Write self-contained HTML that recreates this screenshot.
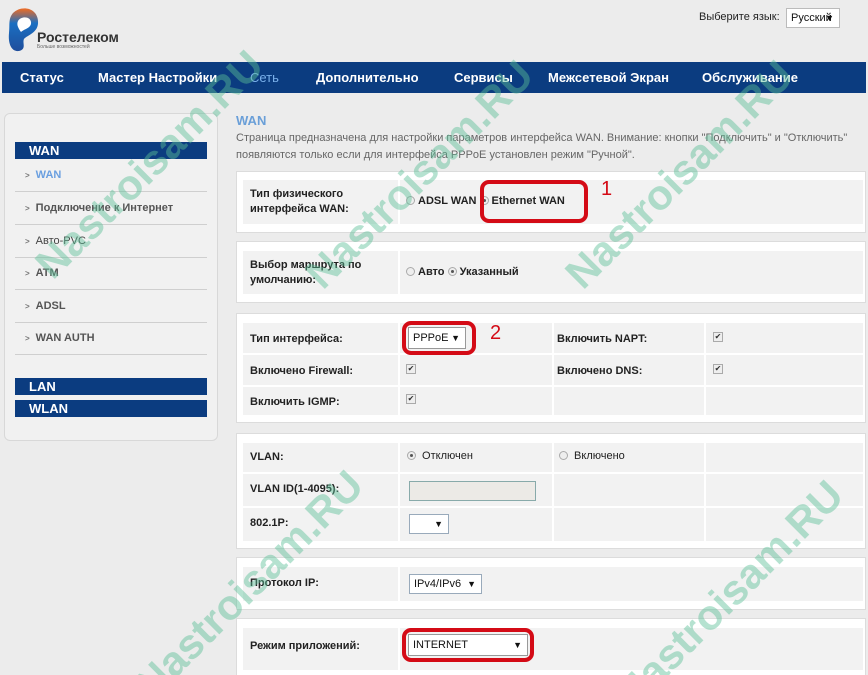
<!DOCTYPE html>
<html><head><meta charset="utf-8"><style>
*{margin:0;padding:0;box-sizing:border-box}
html,body{width:868px;height:675px;overflow:hidden}
body{background:#ececec;font-family:"Liberation Sans",Arial,sans-serif;position:relative;color:#333}
.a{position:absolute}
.nav{left:2px;top:62px;width:864px;height:31px;background:#0b3c80}
.nav span{position:absolute;top:8px;color:#fff;font-weight:bold;font-size:13px}
.side{left:4px;top:113px;width:214px;height:328px;border:1px solid #d8d8d8;border-radius:6px;background:#f1f1f1}
.hd{position:absolute;left:15px;width:192px;height:17px;background:#0b3c80;color:#fff;font-weight:bold;font-size:13px;padding-left:14px;line-height:17px}
.it{position:absolute;left:15px;width:192px;height:33px;border-bottom:1px solid #cfcfcf;font-size:11px;color:#555;padding-left:10px;font-weight:bold}
.it b{font-size:8px;color:#777;margin-right:6px}
.pn{position:absolute;left:236px;width:630px;background:#fff;border:1px solid #dcdcdc}
.row{position:absolute;left:6px;width:620px;background:#f2f2f2}
.c{position:absolute;top:0;bottom:0;border-left:2px solid #fff}
.l{position:absolute;font-size:11px;font-weight:bold;color:#222;line-height:15px}
.v{position:absolute;font-size:11px;color:#222;font-weight:bold}
.rd{display:inline-block;width:9px;height:9px;border:1px solid #aaa;border-radius:50%;background:#eee;vertical-align:-1px;margin-right:3px;position:relative}
.rd.on:after{content:"";position:absolute;left:2px;top:2px;width:3px;height:3px;border-radius:50%;background:#555}
.cb{position:absolute;width:10px;height:10px;border:1px solid #aaa;background:#eee;font-size:8px;line-height:8px;text-align:center;color:#333}
.sel{position:absolute;background:#fff;border:1px solid #9ab;font-size:11px;padding-left:4px;color:#111}
.sel i{position:absolute;right:5px;top:50%;margin-top:-5px;font-style:normal;font-size:9px;line-height:10px;height:10px}
.red{position:absolute;border:4px solid #d40b16;border-radius:9px}
.num{position:absolute;color:#d40b16;font-size:20px}
.wm{position:absolute;color:rgba(90,190,150,.45);font-weight:bold;font-size:42px;transform:rotate(-45deg);transform-origin:left bottom;white-space:nowrap}
</style></head><body>
<svg class="a" style="left:5px;top:5px" width="40" height="50" viewBox="0 0 40 50">
<defs><linearGradient id="g" x1="0" y1="0" x2="0" y2="1"><stop offset="0" stop-color="#f26b21"/><stop offset=".35" stop-color="#1a6fc2"/><stop offset="1" stop-color="#1f4e9c"/></linearGradient></defs>
<path d="M8 8 C16 0 32 2 33 16 C34 28 22 30 19 34 C17 38 22 44 14 46 C6 47 3 38 4 28 C5 20 3 14 8 8Z" fill="url(#g)"/>
<path d="M13 16 C16 11 25 11 26 17 C27 23 19 24 16 27 C14 24 11 20 13 16Z" fill="#fff"/>
</svg>
<div class="a" style="left:37px;top:29px;font-size:14px;color:#333;font-weight:bold">Ростелеком</div>
<div class="a" style="left:37px;top:44px;font-size:5px;color:#666">Больше возможностей</div>
<div class="a" style="left:699px;top:11px;font-size:11px;color:#222">Выберите язык:</div>
<div class="sel" style="left:786px;top:8px;width:54px;height:20px;line-height:18px;border-color:#bbb">Русский<i>▼</i></div>
<div class="a nav">
<span style="left:18px">Статус</span><span style="left:96px">Мастер Настройки</span><span style="left:248px;color:#7ab0ea;font-weight:normal">Сеть</span><span style="left:314px">Дополнительно</span><span style="left:452px">Сервисы</span><span style="left:546px">Межсетевой Экран</span><span style="left:700px">Обслуживание</span>
</div>
<div class="a side"></div>
<div class="hd" style="top:142px">WAN</div>
<div class="it" style="top:159px;line-height:33px;color:#6a9fe0"><b>&gt;</b>WAN</div>
<div class="it" style="top:192px;line-height:33px"><b>&gt;</b>Подключение к Интернет</div>
<div class="it" style="top:225px;line-height:33px;font-weight:normal;color:#444"><b>&gt;</b>Авто-PVC</div>
<div class="it" style="top:257px;line-height:33px"><b>&gt;</b>ATM</div>
<div class="it" style="top:290px;line-height:33px"><b>&gt;</b>ADSL</div>
<div class="it" style="top:322px;line-height:33px"><b>&gt;</b>WAN AUTH</div>
<div class="hd" style="top:378px">LAN</div>
<div class="hd" style="top:400px">WLAN</div>

<div class="a" style="left:236px;top:113px;font-size:13px;font-weight:bold;color:#6a9fd8">WAN</div>
<div class="a" style="left:236px;top:130px;width:630px;font-size:11px;color:#666;line-height:17px">Страница предназначена для настройки параметров интерфейса WAN. Внимание: кнопки "Подключить" и "Отключить" появляются только если для интерфейса PPPoE установлен режим "Ручной".</div>

<div class="pn" style="top:171px;height:62px"><div class="row" style="top:8px;height:44px"><div class="c" style="left:155px"></div>
<div class="l" style="left:7px;top:7px">Тип физического<br>интерфейса WAN:</div>
<div class="v" style="left:163px;top:15px;font-weight:normal"><span class="rd"></span><b>ADSL WAN</b> <span class="rd on"></span><b>Ethernet WAN</b></div></div></div>

<div class="pn" style="top:241px;height:62px"><div class="row" style="top:9px;height:43px"><div class="c" style="left:155px"></div>
<div class="l" style="left:7px;top:7px">Выбор маршрута по<br>умолчанию:</div>
<div class="v" style="left:163px;top:15px;font-weight:normal"><span class="rd"></span><b>Авто</b> <span class="rd on"></span><b>Указанный</b></div></div></div>

<div class="pn" style="top:313px;height:110px"><div class="row" style="top:9px;height:92px">
<div class="c" style="left:155px"></div><div class="c" style="left:309px"></div><div class="c" style="left:461px"></div>
<div class="a" style="left:0;top:30px;width:620px;height:2px;background:#fff"></div><div class="a" style="left:0;top:62px;width:620px;height:2px;background:#fff"></div>
<div class="l" style="left:7px;top:9px">Тип интерфейса:</div>
<div class="l" style="left:7px;top:41px">Включено Firewall:</div>
<div class="l" style="left:7px;top:72px">Включить IGMP:</div>
<div class="l" style="left:314px;top:9px">Включить NAPT:</div>
<div class="l" style="left:314px;top:41px">Включено DNS:</div>
<div class="cb" style="left:163px;top:41px">✔</div><div class="cb" style="left:163px;top:71px">✔</div>
<div class="cb" style="left:470px;top:9px">✔</div><div class="cb" style="left:470px;top:41px">✔</div>
</div></div>
<div class="sel" style="left:408px;top:327px;width:58px;height:22px;line-height:20px;border-color:#999">PPPoE<i>▼</i></div>

<div class="pn" style="top:433px;height:116px"><div class="row" style="top:9px;height:98px">
<div class="c" style="left:155px"></div><div class="c" style="left:309px"></div><div class="c" style="left:461px"></div>
<div class="a" style="left:0;top:29px;width:620px;height:2px;background:#fff"></div><div class="a" style="left:0;top:63px;width:620px;height:2px;background:#fff"></div>
<div class="l" style="left:7px;top:7px">VLAN:</div>
<div class="l" style="left:7px;top:39px">VLAN ID(1-4095):</div>
<div class="l" style="left:7px;top:73px">802.1P:</div>
<div class="v" style="left:164px;top:7px;font-weight:normal"><span class="rd on"></span> Отключен</div>
<div class="v" style="left:316px;top:7px;font-weight:normal"><span class="rd"></span> Включено</div>
<div class="a" style="left:166px;top:38px;width:127px;height:20px;background:#eceae6;border:1px solid #8aa"></div>
<div class="sel" style="left:166px;top:71px;width:40px;height:20px"><i>▼</i></div>
</div></div>

<div class="pn" style="top:557px;height:53px"><div class="row" style="top:9px;height:34px"><div class="c" style="left:155px"></div>
<div class="l" style="left:7px;top:9px">Протокол IP:</div>
<div class="sel" style="left:166px;top:7px;width:73px;height:20px;line-height:18px">IPv4/IPv6<i>▼</i></div></div></div>

<div class="pn" style="top:618px;height:60px"><div class="row" style="top:9px;height:42px"><div class="c" style="left:155px"></div>
<div class="l" style="left:7px;top:11px">Режим приложений:</div></div></div>
<div class="sel" style="left:408px;top:634px;width:120px;height:22px;line-height:20px;border-color:#999">INTERNET<i>▼</i></div>

<div class="red" style="left:480px;top:180px;width:108px;height:43px"></div>
<div class="num" style="left:601px;top:178px">1</div>
<div class="red" style="left:402px;top:321px;width:74px;height:34px"></div>
<div class="num" style="left:490px;top:322px">2</div>
<div class="red" style="left:402px;top:628px;width:132px;height:34px"></div>

<div class="wm" style="left:60px;top:240px">Nastroisam.RU</div>
<div class="wm" style="left:330px;top:250px">Nastroisam.RU</div>
<div class="wm" style="left:590px;top:250px">Nastroisam.RU</div>
<div class="wm" style="left:160px;top:660px">Nastroisam.RU</div>
<div class="wm" style="left:640px;top:670px">Nastroisam.RU</div>
</body></html>
